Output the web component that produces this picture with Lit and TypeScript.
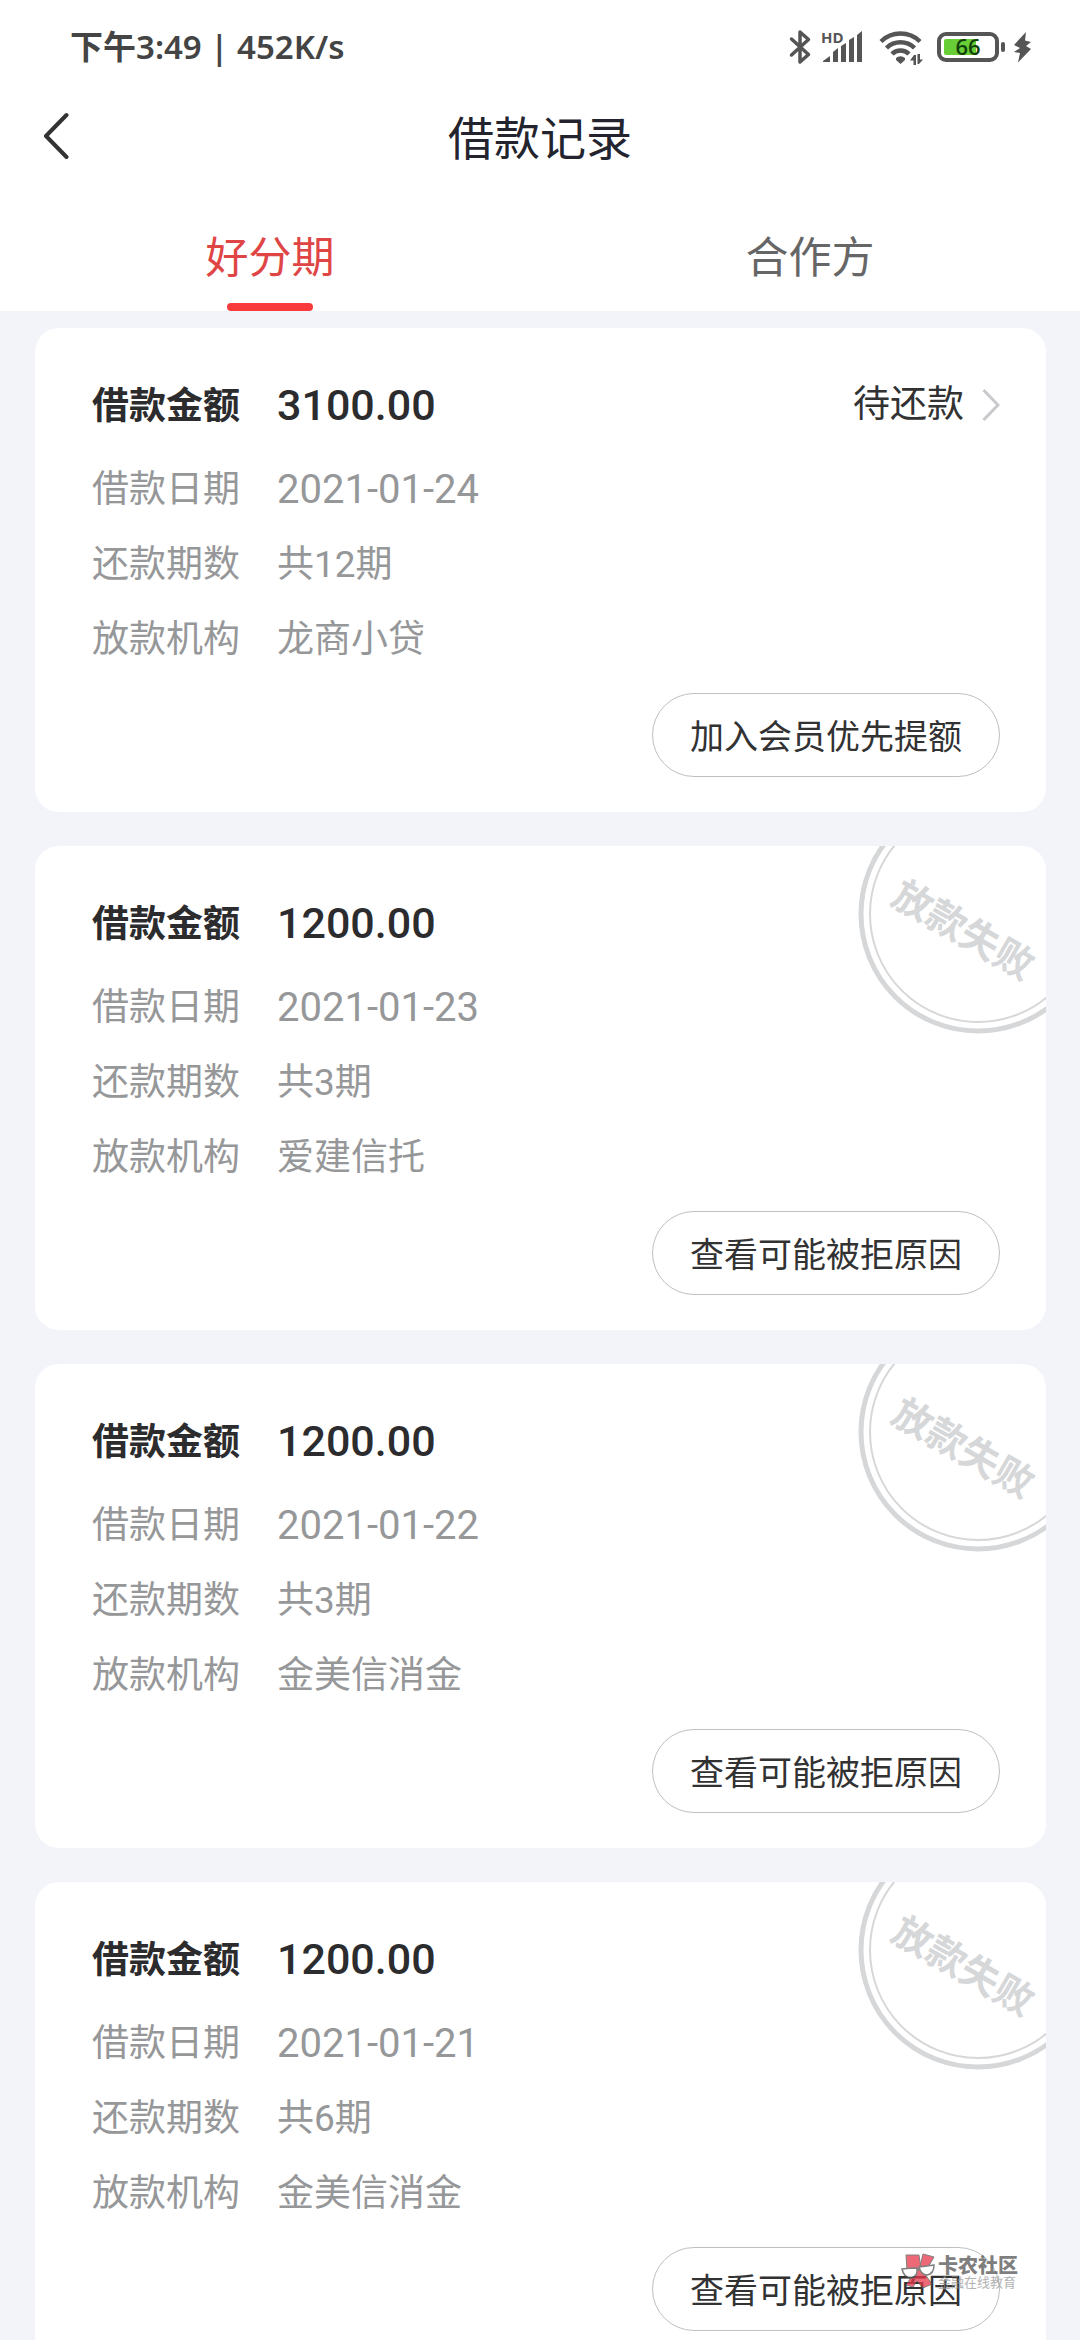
import { LitElement, html, css, nothing } from "lit";
import { customElement, property, state } from "lit/decorators.js";

interface Loan {
  amount: string;
  date: string;
  periods: string;
  lender: string;
  failed: boolean;
  action: string;
}

const LOANS: Loan[] = [
  { amount: "3100.00", date: "2021-01-24", periods: "共12期", lender: "龙商小贷", failed: false, action: "加入会员优先提额" },
  { amount: "1200.00", date: "2021-01-23", periods: "共3期", lender: "爱建信托", failed: true, action: "查看可能被拒原因" },
  { amount: "1200.00", date: "2021-01-22", periods: "共3期", lender: "金美信消金", failed: true, action: "查看可能被拒原因" },
  { amount: "1200.00", date: "2021-01-21", periods: "共6期", lender: "金美信消金", failed: true, action: "查看可能被拒原因" },
];

@customElement("status-bar")
class StatusBar extends LitElement {
  static styles = css`
    :host {
      display: flex;
      justify-content: space-between;
      align-items: center;
      height: 94px;
      padding: 0 48px 0 70px;
      color: #444;
    }
    .clock {
      font: 600 33px/40px "Noto Sans", "Noto Sans CJK SC", sans-serif;
    }
    .icons {
      display: flex;
      align-items: center;
      fill: #555;
    }
    .bt { margin-right: 10px; }
    .signal { margin-right: 14px; }
    .wifi { margin-right: 14px; }
    .battery { margin-right: 8px; }
    .hd { font: 700 15px "Open Sans", sans-serif; }
    .level { font: 600 22px "Open Sans", sans-serif; fill: #12400a; }
  `;

  render() {
    return html`
      <span class="clock">下午3:49 | 452K/s</span>
      <span class="icons">
        <svg class="bt" width="22" height="36" viewBox="0 0 22 36">
          <path d="M2.500 10 19.500 25.500 11 33V3l8.500 7.500L2.500 26" fill="none" stroke="#555" stroke-width="3.500" stroke-linejoin="round" stroke-linecap="round" />
        </svg>
        <svg class="signal" width="44" height="34" viewBox="0 0 44 34">
          <text class="hd" x="0" y="13">HD</text>
          <path d="M2 32v-1l7-5v6zM12 32V22l5-4v14zM20 32V16l5-3v19zM28 32V10l5-3v25zM36 32V5l5-4v31z" />
        </svg>
        <svg class="wifi" width="44" height="36" viewBox="0 0 44 36">
          <g fill="none" stroke="#555" stroke-width="4.500">
            <path d="M2 12.500a28 28 0 0 1 39 0" />
            <path d="M7.500 19a20 20 0 0 1 28 0" />
            <path d="M13 25a12 12 0 0 1 17 0" />
          </g>
          <path d="M17 29a7 7 0 0 1 9 0v2l-4.500 4-4.500-4zM31 31.500 35 26h2v10h-2.500v-4.500zM38.500 25H41v5.500h3L40 35h-1.500z" />
        </svg>
        <svg class="battery" width="68" height="32" viewBox="0 0 68 32">
          <rect x="2" y="3" width="58" height="26" rx="7" fill="none" stroke="#555" stroke-width="4" />
          <rect x="7" y="8" width="32" height="16" rx="2" fill="#68ce37" />
          <rect x="64" y="11" width="4" height="10" rx="2" />
          <text class="level" x="31" y="24" text-anchor="middle">66</text>
        </svg>
        <svg class="bolt" width="19" height="32" viewBox="0 0 19 32">
          <path d="M13 1 1 14l6 3-6 4 6 1-2 9.500L18 18l-5-3 5-4-6-1.500z" />
        </svg>
      </span>
    `;
  }
}

@customElement("loan-card")
class LoanCard extends LitElement {
  @property({ attribute: false }) loan!: Loan;

  static styles = css`
    :host {
      display: block;
      flex: none;
      position: relative;
      overflow: hidden;
      box-sizing: border-box;
      padding: 34px 46px 35px 57px;
      border-radius: 24px;
      background: #fff;
      color: #323233;
      font: 400 37px/56px Roboto, "Noto Sans CJK SC", sans-serif;
    }
    .facts { margin: 0; }
    .row {
      display: flex;
      align-items: center;
      height: 75px;
      gap: 35px;
      color: #969799;
    }
    .row.head {
      height: 90px;
      color: #2c2c2e;
    }
    .label { min-width: 150px; }
    .head .label { font-weight: 700; }
    .value { margin: 0; }
    .date { font-size: 40px; }
    .amount {
      font-size: 43px;
      font-weight: 500;
      padding-bottom: 4px;
    }
    .due {
      display: flex;
      align-items: center;
      gap: 18px;
      margin: 0 0 0 auto;
      padding-bottom: 4px;
      color: #323233;
    }
    .foot {
      display: flex;
      justify-content: flex-end;
      padding-top: 16px;
    }
    .action {
      height: 84px;
      padding: 0 37px;
      border: 1px solid #bcc1c1;
      border-radius: 42px;
      background: #fff;
      color: #323233;
      font: 400 34px/50px "Noto Sans CJK SC", sans-serif;
    }
    .stamp {
      position: absolute;
      top: -52px;
      right: -52px;
    }
    .stamp-text {
      fill: #d6d7d9;
      font: 700 39px "Noto Sans CJK SC", sans-serif;
    }
  `;

  private stamp() {
    return html`
      <svg class="stamp" width="240" height="240" viewBox="0 0 240 240">
        <circle cx="120" cy="120" r="117" fill="none" stroke="#d6d7d9" stroke-width="5" />
        <circle cx="120" cy="120" r="108" fill="none" stroke="#d6d7d9" stroke-width="2" />
        <text class="stamp-text" transform="translate(106 135) rotate(30)" x="0" y="15" text-anchor="middle">放款失败</text>
      </svg>
    `;
  }

  render() {
    const l = this.loan;
    return html`
      ${l.failed ? this.stamp() : nothing}
      <dl class="facts">
        <div class="row head">
          <dt class="label">借款金额</dt>
          <dd class="value amount">${l.amount}</dd>
          ${l.failed
            ? nothing
            : html`<dd class="due">
                待还款
                <svg width="18" height="34" viewBox="0 0 18 34">
                  <path d="M1.500 2 16 17 1.500 32" fill="none" stroke="#c8c9cc" stroke-width="3" />
                </svg>
              </dd>`}
        </div>
        <div class="row">
          <dt class="label">借款日期</dt>
          <dd class="value date">${l.date}</dd>
        </div>
        <div class="row">
          <dt class="label">还款期数</dt>
          <dd class="value">${l.periods}</dd>
        </div>
        <div class="row">
          <dt class="label">放款机构</dt>
          <dd class="value">${l.lender}</dd>
        </div>
      </dl>
      <div class="foot"><button class="action">${l.action}</button></div>
    `;
  }
}

@customElement("app-root")
class AppRoot extends LitElement {
  @state() private tab = 0;

  static styles = css`
    :host {
      display: flex;
      flex-direction: column;
      position: relative;
      height: 100vh;
      overflow: hidden;
      background: #f3f4f9;
      font-family: "Noto Sans CJK SC", sans-serif;
    }
    .top { background: #fff; }
    .nav {
      display: grid;
      grid-template-columns: 110px 1fr 110px;
      align-items: center;
      height: 82px;
    }
    .back {
      display: flex;
      padding: 0 0 0 42px;
      border: 0;
      background: none;
    }
    .title {
      margin: 0;
      text-align: center;
      color: #24242e;
      font-size: 46px;
      line-height: 60px;
      font-weight: 400;
    }
    .tabs {
      display: grid;
      grid-template-columns: 1fr 1fr;
      height: 135px;
    }
    .tab {
      display: flex;
      flex-direction: column;
      align-items: center;
      justify-content: flex-end;
      gap: 19px;
      padding: 0;
      border: 0;
      background: none;
      color: #666;
      font: 400 43px/60px "Noto Sans CJK SC", sans-serif;
    }
    .tab::after {
      content: "";
      width: 86px;
      height: 8px;
      border-radius: 4px;
    }
    .tab[aria-selected="true"] { color: #e04545; }
    .tab[aria-selected="true"]::after { background: #f93b3b; }
    .list {
      display: flex;
      flex: 1;
      flex-direction: column;
      gap: 34px;
      min-height: 0;
      padding: 17px 34px 34px 35px;
      overflow-y: auto;
      scrollbar-width: none;
    }
    .mark {
      display: flex;
      align-items: center;
      gap: 3px;
      position: absolute;
      right: 62px;
      bottom: 51px;
      opacity: 0.75;
      pointer-events: none;
    }
    .mark-text {
      display: flex;
      flex-direction: column;
      color: #555;
    }
    .mark-name {
      font-size: 20px;
      line-height: 21px;
      font-weight: 900;
    }
    .mark-sub {
      color: #999;
      font-size: 13px;
      line-height: 14px;
    }
  `;

  render() {
    return html`
      <header class="top">
        <status-bar></status-bar>
        <div class="nav">
          <button class="back" aria-label="返回">
            <svg width="28" height="48" viewBox="0 0 28 48">
              <path d="M24.500 4 4 25l20.500 21" fill="none" stroke="#333" stroke-width="4" stroke-linecap="round" stroke-linejoin="round" />
            </svg>
          </button>
          <h1 class="title">借款记录</h1>
        </div>
        <div class="tabs" role="tablist">
          ${["好分期", "合作方"].map(
            (name, i) => html`<button class="tab" role="tab" aria-selected=${this.tab === i ? "true" : "false"} @click=${() => (this.tab = i)}>${name}</button>`
          )}
        </div>
      </header>
      <main class="list">
        ${LOANS.map((loan) => html`<loan-card .loan=${loan}></loan-card>`)}
      </main>
      <div class="mark">
        <svg width="34" height="36" viewBox="0 0 34 36">
          <g fill="#e8384a" stroke="#555" stroke-width="1">
            <path d="M5 2h13l2 14-14 1zM22 1l11 3-7 12-8 1z" />
            <path d="M15 17h6l10 14-9 4-6-7-4 6-7-2z" />
          </g>
          <g fill="#fff" stroke="#555" stroke-width="1.500">
            <path d="M1 16q8-1 15-1 1 9-6 10-7 0-9-9zM18 14q8-1 15-2 0 9-7 10-6 0-8-8z" />
          </g>
        </svg>
        <div class="mark-text">
          <span class="mark-name">卡农社区</span>
          <span class="mark-sub">金融在线教育</span>
        </div>
      </div>
    `;
  }
}
